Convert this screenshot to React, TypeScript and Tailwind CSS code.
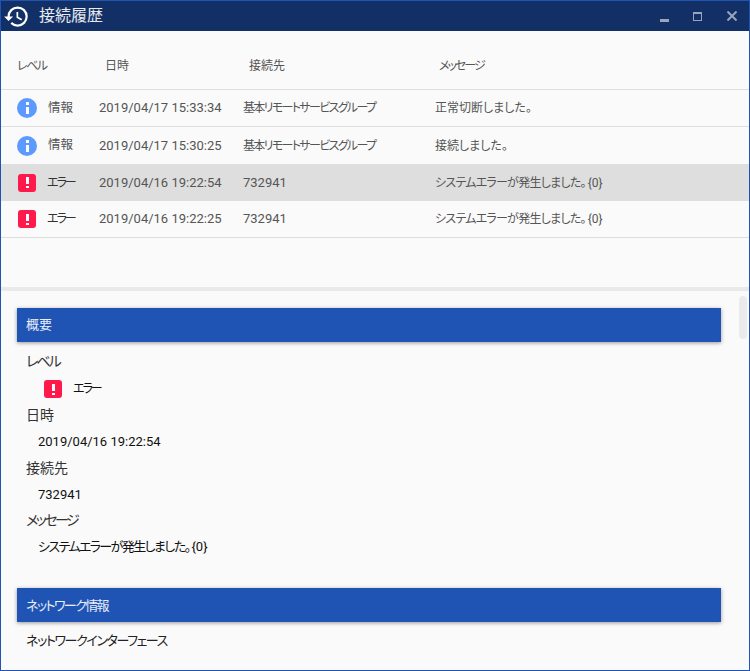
const font = { fontFamily: 'Roboto, "Noto Sans CJK JP", sans-serif' };

type Row = { kind: 'info' | 'error'; date: string; dest: string; message: string; selected?: boolean };

const rows: Row[] = [
  { kind: 'info', date: '2019/04/17 15:33:34', dest: '基本リモートサービスグループ', message: '正常切断しました。' },
  { kind: 'info', date: '2019/04/17 15:30:25', dest: '基本リモートサービスグループ', message: '接続しました。' },
  { kind: 'error', date: '2019/04/16 19:22:54', dest: '732941', message: 'システムエラーが発生しました。{0}', selected: true },
  { kind: 'error', date: '2019/04/16 19:22:25', dest: '732941', message: 'システムエラーが発生しました。{0}' },
];

function HistoryIcon() {
  return (
    <svg viewBox="0 0 24 24" className="w-[27px] h-[27px] fill-white shrink-0">
      <path d="M13 3a9 9 0 0 0-9 9H1l3.89 3.89.07.14L9 12H6c0-3.87 3.13-7 7-7s7 3.13 7 7-3.13 7-7 7c-1.93 0-3.68-.79-4.94-2.06l-1.42 1.42A8.954 8.954 0 0 0 13 21a9 9 0 0 0 0-18zm-1 5v5l4.28 2.54.72-1.21-3.5-2.08V8H12z" />
    </svg>
  );
}

function InfoIcon() {
  return (
    <div className="w-5 h-5 rounded-full bg-[#5c9aff] flex flex-col items-center justify-center gap-[2px]">
      <div className="w-[3px] h-[3px] bg-white" />
      <div className="w-[3px] h-[7px] bg-white" />
    </div>
  );
}

function ErrorIcon() {
  return (
    <div className="w-[18px] h-[18px] rounded-[3px] bg-[#ff1a4b] flex flex-col items-center justify-center gap-[2px]">
      <div className="w-[3px] h-[7px] bg-white" />
      <div className="w-[3px] h-[2px] bg-white" />
    </div>
  );
}

function SectionBar({ title, className }: { title: string; className?: string }) {
  return (
    <div className="h-[34px] w-[704px] bg-[#2054b4] text-white/90 text-[13px] pl-[9px] flex items-center shadow-[0_1px_4px_rgba(0,0,0,0.4)]">
      <span className={className}>{title}</span>
    </div>
  );
}

function Label({ text, className }: { text: string; className?: string }) {
  return <div className={`h-[26.3px] pl-[9px] text-[14px] text-[#333] flex items-center ${className ?? ''}`}>{text}</div>;
}

function Value({ text }: { text: string }) {
  return <div className="h-[26.3px] pl-[21px] text-[13px] text-[#111] flex items-center">{text}</div>;
}

// splits the trailing {0} off so the kana can be tightened on their own
function Message({ text, className }: { text: string; className: string }) {
  const tail = text.endsWith('{0}');
  return (
    <>
      <span className={className}>{tail ? text.slice(0, -3) : text}</span>
      {tail && <span className="ml-[2px]">{'{0}'}</span>}
    </>
  );
}

export default function App() {
  return (
    <div style={font} className="w-[750px] h-[671px] border border-[#2054b4] bg-[#fafafa] flex flex-col overflow-hidden [font-feature-settings:'palt']">
      {/* Title bar */}
      <div className="h-[30px] bg-[#133066] flex items-center pl-[2px] shrink-0">
        <HistoryIcon />
        <span className="ml-[9px] text-[16px] text-white/90">接続履歴</span>
        <div className="ml-auto flex items-center">
          <div className="w-[9px] h-[3px] mt-[9px] bg-[#98a5bd]" />
          <div className="ml-[24px] w-[9px] h-[9px] border border-t-2 border-[#98a5bd]" />
          <svg viewBox="0 0 10 10" className="ml-[25px] mr-[12px] w-[10px] h-[10px] stroke-[#98a5bd] stroke-2">
            <path d="M0.5 0.5 9.5 9.5M9.5 0.5 0.5 9.5" />
          </svg>
        </div>
      </div>

      {/* History table */}
      <div className="h-[256px] shrink-0 text-[13px] text-[#555]">
        <div className="h-[59px] flex items-center pl-4 pt-3 border-b border-[#dedede] text-[12px]">
          <div className="w-[88px] tracking-[-1.5px]">レベル</div>
          <div className="w-[144px]">日時</div>
          <div className="w-[190px]">接続先</div>
          <div className="tracking-[-2px]">メッセージ</div>
        </div>
        {rows.map((r, i) => (
          <div
            key={i}
            className={`h-[37px] flex items-center pl-4 ${r.selected ? 'bg-[#dedede]' : 'border-b border-[#dedede]'} ${i === 1 ? 'border-b-0' : ''}`}
          >
            {r.kind === 'info' ? (
              <>
                <div className="w-[31px]"><InfoIcon /></div>
                <div className="w-[51px] text-[12.5px]">情報</div>
              </>
            ) : (
              <>
                <div className="w-[30px] pl-px"><ErrorIcon /></div>
                <div className="w-[52px] text-[12px] tracking-[-2px] text-[#333]">エラー</div>
              </>
            )}
            <div className="w-[144px]">{r.date}</div>
            <div className={`w-[192px] ${r.kind === 'info' ? 'text-[12px] tracking-[-1.65px]' : ''}`}>{r.dest}</div>
            <div className="text-[12px]">
              <Message text={r.message} className={r.kind === 'error' ? 'tracking-[-0.75px]' : ''} />
            </div>
          </div>
        ))}
      </div>

      <div className="h-1 bg-[#e9e9e9] shrink-0" />

      {/* Detail panel */}
      <div className="flex-1 relative pl-4 pt-[17px] overflow-hidden">
        <div className="absolute right-[2px] top-[5px] w-2 h-[43px] rounded bg-[#ebebeb]" />
        <SectionBar title="概要" />
        <div className="mt-[6px]">
          <Label text="レベル" className="tracking-[-2px]" />
          <div className="mt-[2px] h-[26.3px] pl-[27px] flex items-center text-[12px] text-[#111]">
            <ErrorIcon />
            <span className="ml-[11px] tracking-[-2px]">エラー</span>
          </div>
          <Label text="日時" />
          <Value text="2019/04/16 19:22:54" />
          <Label text="接続先" />
          <Value text="732941" />
          <Label text="メッセージ" className="tracking-[-2.5px]" />
          <div className="h-[26.3px] pl-[21px] text-[13px] text-[#111] flex items-center">
            <Message text="システムエラーが発生しました。{0}" className="tracking-[-1.6px]" />
          </div>
        </div>
        <div className="mt-[28px]">
          <SectionBar title="ネットワーク情報" className="tracking-[-1.6px]" />
        </div>
        <div className="mt-[5px] h-[26px] pl-[9px] text-[13px] text-[#222] flex items-center tracking-[-1.4px]">ネットワークインターフェース</div>
      </div>
    </div>
  );
}
